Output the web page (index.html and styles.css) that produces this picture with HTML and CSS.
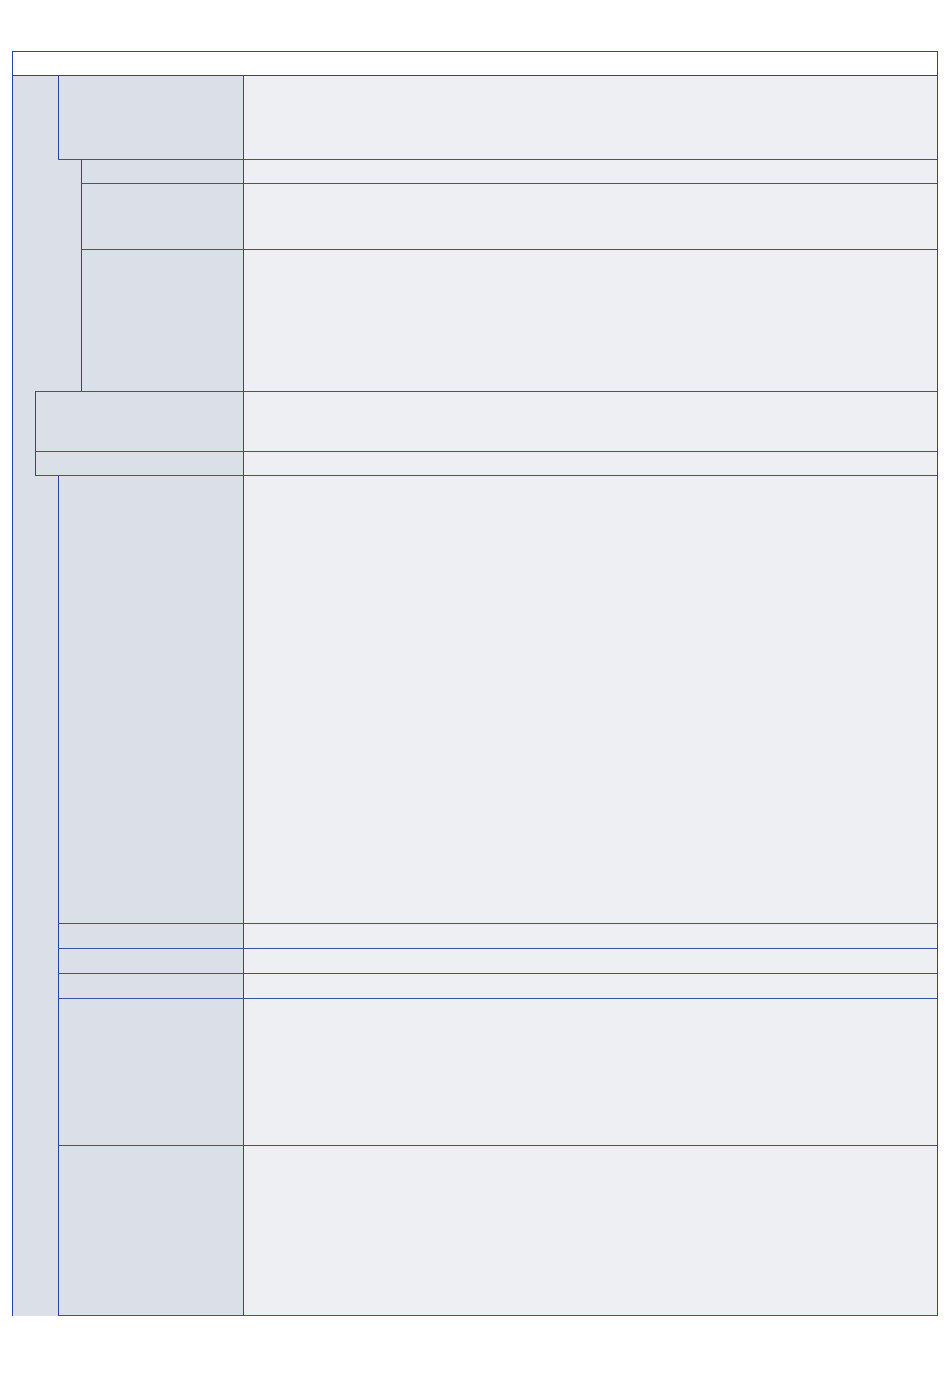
FILE: index.html
```html
<!DOCTYPE html>
<html lang="en">

<head>
  <meta charset="UTF-8" />
  <meta name="viewport" content="width=device-width, initial-scale=1.0" />
  <title>Tabla</title>
  <link rel="stylesheet" href="styles.css">
</head>

<body>
  <div class="sheet">
    <div class="head"></div>

    <!-- grupo 1 -->
    <div class="row lvl1 h84 line-bottom">
      <div class="pad"></div>
      <div class="key"></div>
      <div class="val"></div>
    </div>
    <div class="row lvl2 h23 no-line">
      <div class="pad"></div>
      <div class="key"></div>
      <div class="val"></div>
    </div>
    <div class="row lvl2 h66">
      <div class="pad"></div>
      <div class="key"></div>
      <div class="val"></div>
    </div>
    <div class="row lvl2 h142">
      <div class="pad"></div>
      <div class="key"></div>
      <div class="val"></div>
    </div>

    <!-- grupo 2 -->
    <div class="row lvl0 h60">
      <div class="pad"></div>
      <div class="key"></div>
      <div class="val"></div>
    </div>
    <div class="row lvl0 h25 line-bottom">
      <div class="pad"></div>
      <div class="key"></div>
      <div class="val"></div>
    </div>

    <!-- grupo 3 -->
    <div class="row lvl1 h447 no-line">
      <div class="pad"></div>
      <div class="key"></div>
      <div class="val"></div>
    </div>
    <div class="row lvl1 h25">
      <div class="pad"></div>
      <div class="key"></div>
      <div class="val"></div>
    </div>
    <div class="row lvl1 h25">
      <div class="pad"></div>
      <div class="key"></div>
      <div class="val"></div>
    </div>
    <div class="row lvl1 h25">
      <div class="pad"></div>
      <div class="key"></div>
      <div class="val"></div>
    </div>
    <div class="row lvl1 h147">
      <div class="pad"></div>
      <div class="key"></div>
      <div class="val"></div>
    </div>
    <div class="row lvl1 h171 line-bottom">
      <div class="pad"></div>
      <div class="key"></div>
      <div class="val"></div>
    </div>
  </div>
</body>

</html>
```

FILE: styles.css
```css
* {
  margin: 0px;
  padding: 0px;
  box-sizing: border-box;
}

body {
  font-family: "Liberation Sans", Arial, sans-serif;
  background-color: #ffffff;
}

.sheet {
  width: 926px;
  margin: 51px 0 0 12px;
  background-color: #dbdfe8;
  border-left: 1px solid #2a43a0;
  border-right: 1px solid #2a43a0;
  border-top: 1px solid #2e4592;
}

.head {
  height: 24px;
  background-color: #ffffff;
  border-bottom: 1px solid #2e4592;
}

.row {
  display: flex;
}

.key,
.val {
  border-top: 1px solid #3a5593;
}

.key {
  background-color: #dbdfe8;
  border-left: 1px solid #2a43a0;
}

.val {
  flex: 1;
  background-color: #eeeff2;
  border-left: 1px solid #2f4894;
}

.no-line .key,
.no-line .val {
  border-top: none;
}

.line-bottom .key,
.line-bottom .val {
  border-bottom: 1px solid #3a5593;
}

.line-bottom .val {
  border-top: 1px solid #3a5593;
}

/* el primer bloque ya tiene la linea de la cabecera */
.lvl1.h84 .key,
.lvl1.h84 .val {
  border-top: none;
}

/* sangria por nivel */
.lvl0 .pad { width: 22px; }
.lvl0 .key { width: 208px; }

.lvl1 .pad { width: 45px; }
.lvl1 .key { width: 185px; }

.lvl2 .pad { width: 68px; }
.lvl2 .key { width: 162px; }

/* altos de fila */
.h23 { height: 23px; }
.h25 { height: 25px; }
.h60 { height: 60px; }
.h66 { height: 66px; }
.h84 { height: 84px; }
.h142 { height: 142px; }
.h147 { height: 147px; }
.h171 { height: 171px; }
.h447 { height: 447px; }
```
